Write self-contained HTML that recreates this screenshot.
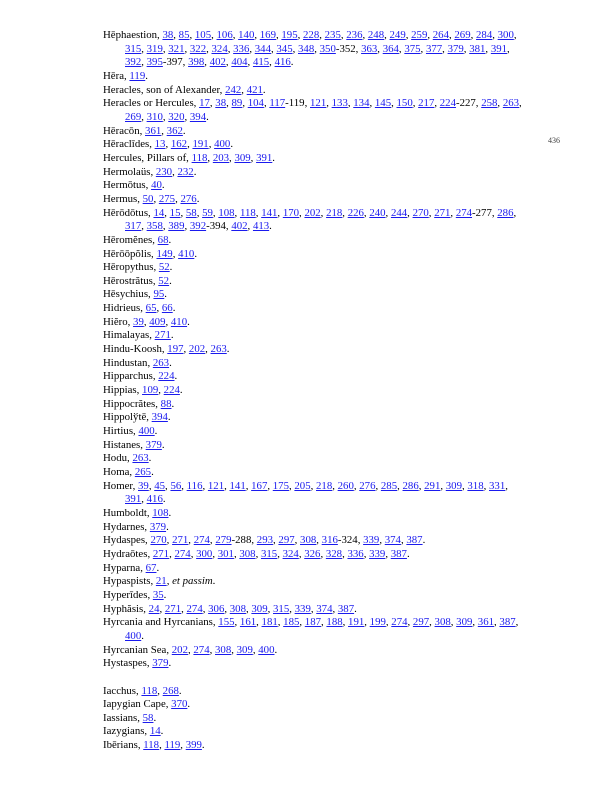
<!DOCTYPE html>
<html><head><meta charset="utf-8"><style>
body{margin:0;background:#fff;width:612px;height:792px;position:relative;font-family:"Liberation Serif",serif;font-size:10.82px;color:#000}
#c{position:absolute;left:103px;top:29px;width:480px;line-height:13.67px;white-space:nowrap}
#c div{height:13.67px}
.i{padding-left:22px}
a{color:#1a1aee;text-decoration:underline}
.pn{position:absolute;left:548px;top:136px;font-size:8px;color:#444}
</style></head><body>
<div class="pn">436</div>
<div id="c">
<div>Hēphaestion, <a>38</a>, <a>85</a>, <a>105</a>, <a>106</a>, <a>140</a>, <a>169</a>, <a>195</a>, <a>228</a>, <a>235</a>, <a>236</a>, <a>248</a>, <a>249</a>, <a>259</a>, <a>264</a>, <a>269</a>, <a>284</a>, <a>300</a>,</div>
<div class="i"><a>315</a>, <a>319</a>, <a>321</a>, <a>322</a>, <a>324</a>, <a>336</a>, <a>344</a>, <a>345</a>, <a>348</a>, <a>350</a>-352, <a>363</a>, <a>364</a>, <a>375</a>, <a>377</a>, <a>379</a>, <a>381</a>, <a>391</a>,</div>
<div class="i"><a>392</a>, <a>395</a>-397, <a>398</a>, <a>402</a>, <a>404</a>, <a>415</a>, <a>416</a>.</div>
<div>Hēra, <a>119</a>.</div>
<div>Heracles, son of Alexander, <a>242</a>, <a>421</a>.</div>
<div>Heracles or Hercules, <a>17</a>, <a>38</a>, <a>89</a>, <a>104</a>, <a>117</a>-119, <a>121</a>, <a>133</a>, <a>134</a>, <a>145</a>, <a>150</a>, <a>217</a>, <a>224</a>-227, <a>258</a>, <a>263</a>,</div>
<div class="i"><a>269</a>, <a>310</a>, <a>320</a>, <a>394</a>.</div>
<div>Hēracōn, <a>361</a>, <a>362</a>.</div>
<div>Hēraclīdes, <a>13</a>, <a>162</a>, <a>191</a>, <a>400</a>.</div>
<div>Hercules, Pillars of, <a>118</a>, <a>203</a>, <a>309</a>, <a>391</a>.</div>
<div>Hermolaüs, <a>230</a>, <a>232</a>.</div>
<div>Hermōtus, <a>40</a>.</div>
<div>Hermus, <a>50</a>, <a>275</a>, <a>276</a>.</div>
<div>Hērōdōtus, <a>14</a>, <a>15</a>, <a>58</a>, <a>59</a>, <a>108</a>, <a>118</a>, <a>141</a>, <a>170</a>, <a>202</a>, <a>218</a>, <a>226</a>, <a>240</a>, <a>244</a>, <a>270</a>, <a>271</a>, <a>274</a>-277, <a>286</a>,</div>
<div class="i"><a>317</a>, <a>358</a>, <a>389</a>, <a>392</a>-394, <a>402</a>, <a>413</a>.</div>
<div>Hēromĕnes, <a>68</a>.</div>
<div>Hērōōpŏlis, <a>149</a>, <a>410</a>.</div>
<div>Hēropythus, <a>52</a>.</div>
<div>Hērostrătus, <a>52</a>.</div>
<div>Hēsychius, <a>95</a>.</div>
<div>Hidrieus, <a>65</a>, <a>66</a>.</div>
<div>Hiĕro, <a>39</a>, <a>409</a>, <a>410</a>.</div>
<div>Himalayas, <a>271</a>.</div>
<div>Hindu-Koosh, <a>197</a>, <a>202</a>, <a>263</a>.</div>
<div>Hindustan, <a>263</a>.</div>
<div>Hipparchus, <a>224</a>.</div>
<div>Hippias, <a>109</a>, <a>224</a>.</div>
<div>Hippocrătes, <a>88</a>.</div>
<div>Hippolўtē, <a>394</a>.</div>
<div>Hirtius, <a>400</a>.</div>
<div>Histanes, <a>379</a>.</div>
<div>Hodu, <a>263</a>.</div>
<div>Homa, <a>265</a>.</div>
<div>Homer, <a>39</a>, <a>45</a>, <a>56</a>, <a>116</a>, <a>121</a>, <a>141</a>, <a>167</a>, <a>175</a>, <a>205</a>, <a>218</a>, <a>260</a>, <a>276</a>, <a>285</a>, <a>286</a>, <a>291</a>, <a>309</a>, <a>318</a>, <a>331</a>,</div>
<div class="i"><a>391</a>, <a>416</a>.</div>
<div>Humboldt, <a>108</a>.</div>
<div>Hydarnes, <a>379</a>.</div>
<div>Hydaspes, <a>270</a>, <a>271</a>, <a>274</a>, <a>279</a>-288, <a>293</a>, <a>297</a>, <a>308</a>, <a>316</a>-324, <a>339</a>, <a>374</a>, <a>387</a>.</div>
<div>Hydraōtes, <a>271</a>, <a>274</a>, <a>300</a>, <a>301</a>, <a>308</a>, <a>315</a>, <a>324</a>, <a>326</a>, <a>328</a>, <a>336</a>, <a>339</a>, <a>387</a>.</div>
<div>Hyparna, <a>67</a>.</div>
<div>Hypaspists, <a>21</a>, <i>et passim</i>.</div>
<div>Hyperīdes, <a>35</a>.</div>
<div>Hyphăsis, <a>24</a>, <a>271</a>, <a>274</a>, <a>306</a>, <a>308</a>, <a>309</a>, <a>315</a>, <a>339</a>, <a>374</a>, <a>387</a>.</div>
<div>Hyrcania and Hyrcanians, <a>155</a>, <a>161</a>, <a>181</a>, <a>185</a>, <a>187</a>, <a>188</a>, <a>191</a>, <a>199</a>, <a>274</a>, <a>297</a>, <a>308</a>, <a>309</a>, <a>361</a>, <a>387</a>,</div>
<div class="i"><a>400</a>.</div>
<div>Hyrcanian Sea, <a>202</a>, <a>274</a>, <a>308</a>, <a>309</a>, <a>400</a>.</div>
<div>Hystaspes, <a>379</a>.</div>
<div></div>
<div>Iacchus, <a>118</a>, <a>268</a>.</div>
<div>Iapygian Cape, <a>370</a>.</div>
<div>Iassians, <a>58</a>.</div>
<div>Iazygians, <a>14</a>.</div>
<div>Ibērians, <a>118</a>, <a>119</a>, <a>399</a>.</div>
</div>
</body></html>
